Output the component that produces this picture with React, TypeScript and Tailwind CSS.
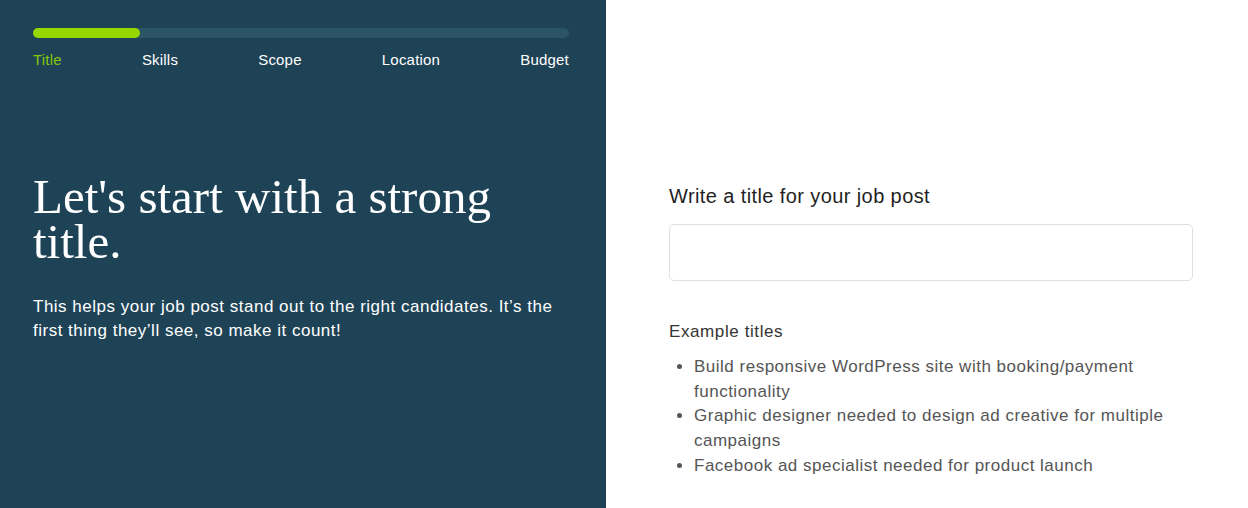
const steps = ["Title", "Skills", "Scope", "Location", "Budget"];

const examples = [
  "Build responsive WordPress site with booking/payment functionality",
  "Graphic designer needed to design ad creative for multiple campaigns",
  "Facebook ad specialist needed for product launch",
];

const App = () => {
  return (
    <div className="flex h-[508px] w-full bg-white" style={{ fontFamily: '"Liberation Sans", Arial, sans-serif' }}>
      {/* Left panel */}
      <div className="flex w-[606px] shrink-0 flex-col bg-[#1e4356] pl-[33px] pr-[37px] pt-[28px]">
        <div className="h-[10px] w-full rounded-full bg-[#2b5467]">
          <div className="h-full w-[107px] rounded-full bg-[#96d700]" />
        </div>
        <div className="mt-[11px] flex justify-between text-[15px] tracking-[0.2px] text-white">
          {steps.map((s, i) => (
            <span key={s} className={i === 0 ? "text-[#86c60a]" : ""}>
              {s}
            </span>
          ))}
        </div>

        <h1
          className="mt-[102px] text-[49px] leading-[45px] text-white"
          style={{ fontFamily: '"Liberation Serif", "Times New Roman", serif' }}
        >
          Let's start with a strong title.
        </h1>
        <p className="mt-[31px] max-w-[525px] text-[17px] leading-[24px] tracking-[0.5px] text-white">
          This helps your job post stand out to the right candidates. It’s the first thing they’ll see, so make it count!
        </p>
      </div>

      {/* Right panel */}
      <div className="flex flex-1 justify-center pl-[63px] pr-[55px] pt-[183px]">
        <div className="w-full">
          <label className="block text-[20px] leading-[26px] tracking-[0.4px] text-[#1f1f1f]">
            Write a title for your job post
          </label>
          <input
            type="text"
            className="mt-[15px] block h-[57px] w-full rounded-[5px] border border-[#e0e0e0] bg-white px-3 outline-none"
          />
          <div className="mt-[40px] text-[17px] leading-[22px] tracking-[0.6px] text-[#333333]">Example titles</div>
          <ul className="mt-[12px] list-disc pl-[25px] text-[17px] leading-[24.7px] tracking-[0.5px] text-[#555555]">
            {examples.map((e) => (
              <li key={e} className="pr-[20px]">
                {e}
              </li>
            ))}
          </ul>
        </div>
      </div>
    </div>
  );
};

export default App;
